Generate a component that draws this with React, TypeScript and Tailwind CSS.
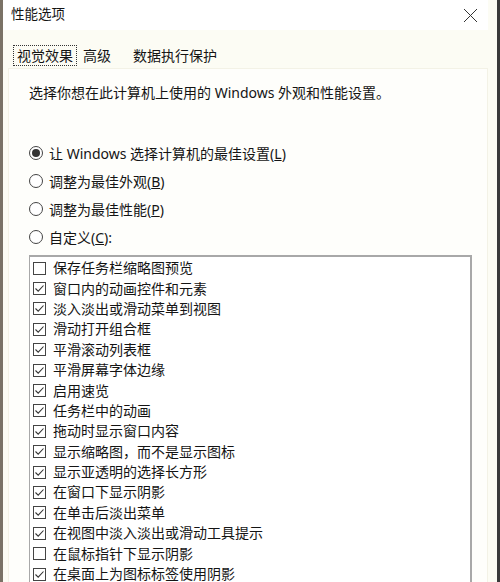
import React from "react";

const items: [string, boolean][] = [
  ["保存任务栏缩略图预览", false],
  ["窗口内的动画控件和元素", true],
  ["淡入淡出或滑动菜单到视图", true],
  ["滑动打开组合框", true],
  ["平滑滚动列表框", true],
  ["平滑屏幕字体边缘", true],
  ["启用速览", true],
  ["任务栏中的动画", true],
  ["拖动时显示窗口内容", true],
  ["显示缩略图，而不是显示图标", true],
  ["显示亚透明的选择长方形", true],
  ["在窗口下显示阴影", true],
  ["在单击后淡出菜单", true],
  ["在视图中淡入淡出或滑动工具提示", true],
  ["在鼠标指针下显示阴影", false],
  ["在桌面上为图标标签使用阴影", true],
];

function Radio({ checked }: { checked?: boolean }) {
  return (
    <span className="w-[14px] h-[14px] rounded-full border border-[#444] bg-white flex items-center justify-center shrink-0">
      {checked && <span className="w-[8px] h-[8px] rounded-full bg-[#333]" />}
    </span>
  );
}

function Check({ checked }: { checked: boolean }) {
  return (
    <span className="w-[13px] h-[13px] border border-[#444] bg-white flex items-center justify-center shrink-0">
      {checked && (
        <svg width="11" height="11" viewBox="0 0 11 11">
          <path d="M1.5 5.5 L4.2 8.2 L9.5 2.5" fill="none" stroke="#333" strokeWidth="1.1" />
        </svg>
      )}
    </span>
  );
}

export default function App() {
  return (
    <div
      className="w-[500px] h-[582px] overflow-hidden flex bg-[#fcfcf4] text-[#141414]"
      style={{ fontFamily: '"Noto Sans", "Noto Sans CJK SC", sans-serif' }}
    >
      <div className="w-[3px] bg-[#7a7266] shrink-0" />
      <div className="flex-1 flex flex-col min-w-0">
        <div className="h-[30px] shrink-0 bg-white flex items-center justify-between pl-[8px] pr-[10px]">
          <span className="text-[13.5px] leading-none">性能选项</span>
          <svg width="15" height="15" viewBox="0 0 15 15">
            <path d="M1 1 L14 14 M14 1 L1 14" stroke="#333" strokeWidth="1" />
          </svg>
        </div>
        <div className="h-[15px] shrink-0" />
        <div className="flex items-center h-[21px] shrink-0 text-[14px] leading-none">
          <span className="ml-[10px] h-[21px] px-[3px] border border-dotted border-[#333] flex items-center">视觉效果</span>
          <span className="ml-[6px]">高级</span>
          <span className="ml-[22px]">数据执行保护</span>
        </div>
        <div className="h-[2px] shrink-0" />
        <div className="ml-[5px] w-[480px] flex-1 bg-[#fefefb] border border-[#f3f2e6] flex flex-col pl-[20px]">
          <div className="mt-[14px] text-[14px] leading-[20px]">选择你想在此计算机上使用的 Windows 外观和性能设置。</div>
          <div className="mt-[40px] flex flex-col gap-[8px] text-[14px]">
            <div className="flex items-center gap-[6px] h-[20px]">
              <Radio checked />
              <span>让 Windows 选择计算机的最佳设置(<u>L</u>)</span>
            </div>
            <div className="flex items-center gap-[6px] h-[20px]">
              <Radio />
              <span>调整为最佳外观(<u>B</u>)</span>
            </div>
            <div className="flex items-center gap-[6px] h-[20px]">
              <Radio />
              <span>调整为最佳性能(<u>P</u>)</span>
            </div>
            <div className="flex items-center gap-[6px] h-[20px]">
              <Radio />
              <span>自定义(<u>C</u>):</span>
            </div>
          </div>
          <div className="mt-[8px] w-[443px] flex-1 bg-white border-t-[2px] border-l border-r-[2px] border-[#a8a8a8] pt-[1px] pl-[3px] flex flex-col">
            {items.map(([label, c]) => (
              <div key={label} className="flex items-center gap-[7px] h-[20.4px] shrink-0 text-[14px]">
                <Check checked={c} />
                <span className="leading-none">{label}</span>
              </div>
            ))}
          </div>
        </div>
      </div>
      <div className="w-[9px] shrink-0 bg-[#fcfcf4]" />
      <div className="w-[3px] shrink-0 bg-[#3a3a3a]" />
    </div>
  );
}
